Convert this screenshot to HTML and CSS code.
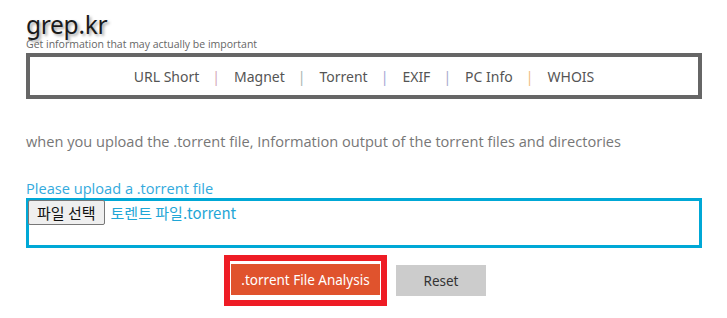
FILE: index.html
```html
<!DOCTYPE html>
<html lang="en">
<head>
    <meta charset="UTF-8">
    <meta name="viewport" content="width=device-width, initial-scale=1.0">
    <title>grep.kr - Torrent</title>
    <link rel="stylesheet" href="styles.css">
</head>
<body>
    <div class="page">
        <header class="site-header">
            <div class="logo">grep.kr</div>
            <div class="tagline">Get information that may actually be important</div>
        </header>

        <nav class="menu">
            <a href="#">URL Short</a><span class="sep sep-pink">|</span>
            <a href="#">Magnet</a><span class="sep sep-green">|</span>
            <a href="#">Torrent</a><span class="sep sep-purple">|</span>
            <a href="#">EXIF</a><span class="sep sep-blue">|</span>
            <a href="#">PC Info</a><span class="sep sep-orange">|</span>
            <a href="#">WHOIS</a>
        </nav>

        <p class="intro">when you upload the .torrent file, Information output of the torrent files and directories</p>

        <form class="upload-form">
            <label class="upload-label" for="torrent-file">Please upload a .torrent file</label>
            <div class="file-box">
                <span class="file-button">파일 선택</span>
                <span class="file-name">토렌트 파일.torrent</span>
            </div>

            <div class="actions">
                <div class="highlight">
                    <button type="button" class="btn btn-analyze">.torrent File Analysis</button>
                </div>
                <button type="reset" class="btn btn-reset">Reset</button>
            </div>
        </form>
    </div>
</body>
</html>
```

FILE: styles.css
```css
body {
    margin: 0;
    background-color: #fff;
    font-family: "Open Sans", "Noto Sans", sans-serif;
    color: #333;
}

.page {
    width: 676px;
    padding: 11px 0 0 26px;
}

.site-header {
    height: 42px;
}

.logo {
    font-family: "Noto Sans", "Open Sans", sans-serif;
    font-size: 24.5px;
    line-height: 27px;
    color: #1a1a1a;
    letter-spacing: -0.3px;
    text-shadow: 2px 2px 3px rgba(0, 0, 0, 0.35);
}

.tagline {
    margin-top: 0;
    font-size: 10.5px;
    line-height: 12px;
    color: #666;
}

.menu {
    height: 38px;
    border: 4px solid #666;
    display: flex;
    justify-content: center;
    align-items: center;
    font-family: "Noto Sans", "Open Sans", sans-serif;
    font-size: 14px;
}

.menu a {
    color: #555;
    text-decoration: none;
}

.sep {
    margin: 0 14px 0 13px;
}

.sep-pink {
    color: #d4a4b8;
}

.sep-green {
    color: #a8b4b0;
}

.sep-purple {
    color: #a4a4d4;
}

.sep-blue {
    color: #a8a8cc;
}

.sep-orange {
    color: #f0bb80;
}

.intro {
    margin: 30px 0 0;
    font-size: 14.6px;
    line-height: 24px;
    color: #777;
}

.upload-form {
    margin-top: 25px;
}

.upload-label {
    display: block;
    font-size: 14.6px;
    line-height: 20px;
    color: #33aadd;
}

.file-box {
    height: 44px;
    border: 3px solid #00a8d6;
    display: flex;
    align-items: flex-start;
}

.file-button {
    margin: -1px 0 0 -1px;
    padding: 0 8px;
    height: 23px;
    line-height: 23px;
    border: 1px solid #777;
    border-radius: 2px;
    background-color: #efefef;
    color: #111;
    font-family: "Noto Sans CJK KR", sans-serif;
    font-size: 15px;
}

.file-name {
    margin-left: 6px;
    line-height: 24px;
    color: #1fa6d6;
    font-family: "Noto Sans CJK KR", sans-serif;
    font-size: 15px;
}

.actions {
    display: flex;
    align-items: center;
    margin-top: 7px;
    padding-left: 198px;
}

.highlight {
    border: 6px solid #ee1c25;
    padding: 3px 1px 5px;
}

.btn {
    border: none;
    font-family: "Noto Sans", "Open Sans", sans-serif;
    font-size: 13.5px;
    height: 31px;
    cursor: pointer;
}

.btn-analyze {
    width: 149px;
    background-color: #e0532d;
    color: #fff;
}

.btn-reset {
    margin-left: 9px;
    width: 90px;
    background-color: #cccccc;
    color: #333;
}
```
